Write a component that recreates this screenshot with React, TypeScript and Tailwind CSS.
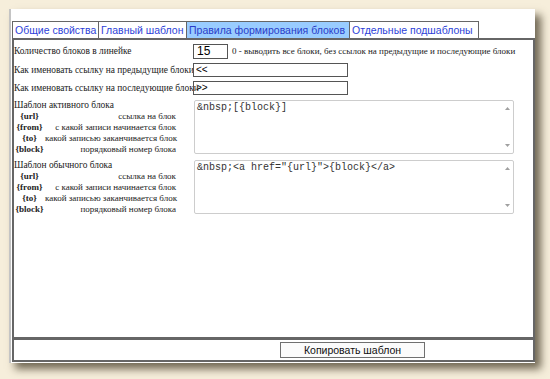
const tabs = [
  { label: 'Общие свойства', w: 'w-[87px] border-l', active: false },
  { label: 'Главный шаблон', w: 'w-[88px]', active: false },
  { label: 'Правила формирования блоков', w: 'w-[163px]', active: true },
  { label: 'Отдельные подшаблоны', w: 'w-[129px]', active: false },
]

const vars = [
  { key: '{url}', text: 'ссылка на блок' },
  { key: '{from}', text: 'с какой записи начинается блок' },
  { key: '{to}', text: 'какой записью заканчивается блок' },
  { key: '{block}', text: 'порядковый номер блока' },
]

function Legend({ title }: { title: string }) {
  return (
    <div className="w-[162px] text-[9px] leading-[11px] text-[#222]">
      <div className="text-[9.4px]">{title}</div>
      {vars.map((v) => (
        <div key={v.key} className="grid grid-cols-[31px_1fr]">
          <span className="text-center font-bold">{v.key}</span>
          <span className="text-right whitespace-nowrap">{v.text}</span>
        </div>
      ))}
    </div>
  )
}

function Area({ value }: { value: string }) {
  return (
    <div className="ml-px flex shrink-0 w-[320px] h-[54px] border border-[#cdcdcd] rounded-[2px] bg-white">
      <div className="flex-1 px-[2px] pt-[1px] font-['Liberation_Mono',monospace] text-[10px] leading-[12px] text-[#333] whitespace-pre">
        {value}
      </div>
      <div className="w-[12px] flex flex-col items-center justify-between py-[6px]">
        <svg width="5" height="3" viewBox="0 0 5 3">
          <path d="M0 3 L2.5 0 L5 3 Z" fill="#a0a0a0" />
        </svg>
        <svg width="5" height="3" viewBox="0 0 5 3">
          <path d="M0 0 L2.5 3 L5 0 Z" fill="#a0a0a0" />
        </svg>
      </div>
    </div>
  )
}

export default function App() {
  return (
    <div className="w-[550px] h-[379px] bg-[#f6eedb] overflow-hidden pt-[9px] pl-[9px]">
      <div className="w-[526px] h-[354px] bg-white border-l-2 border-[#c4c4c4] pl-px pt-[12px] flex flex-col shadow-[6px_6px_8px_rgba(70,60,40,0.75)]">
        <div className="flex h-[17px] font-['Liberation_Sans',sans-serif] text-[10.5px] leading-[16px]">
          {tabs.map((t) => (
            <div
              key={t.label}
              className={`${t.w} shrink-0 border-t border-r border-[#666] px-[2px] whitespace-nowrap ${
                t.active ? 'bg-[#99ccff] text-[#2a3cc8]' : 'text-[#2d3fd8]'
              }`}
            >
              {t.label}
            </div>
          ))}
        </div>

        <div className="h-[301px] border-2 border-[#666] pt-[4px] overflow-hidden font-['Liberation_Serif',serif] text-[9.4px] text-[#222]">
          <div className="flex items-center h-[15px]">
            <div className="shrink-0 w-[179px] whitespace-nowrap">Количество блоков в линейке</div>
            <div className="shrink-0 w-[35px] h-[15px] border border-[#555] px-[3px] font-['Liberation_Sans',sans-serif] text-[12px] leading-[13px] text-black">
              15
            </div>
            <div className="ml-[4px] whitespace-nowrap text-[9px]">
              0 - выводить все блоки, без ссылок на предыдущие и последующие блоки
            </div>
          </div>

          <div className="flex items-center h-[14px] mt-[4px]">
            <div className="shrink-0 w-[179px] whitespace-nowrap">Как именовать ссылку на предыдущие блоки</div>
            <div className="shrink-0 w-[155px] h-[14px] border border-[#555] px-[2px] font-['Liberation_Sans',sans-serif] text-[10px] leading-[12px] text-black">
              {'<<'}
            </div>
          </div>

          <div className="flex items-center h-[14px] mt-[4px]">
            <div className="shrink-0 w-[179px] whitespace-nowrap">Как именовать ссылку на последующие блоки</div>
            <div className="shrink-0 w-[155px] h-[14px] border border-[#555] px-[2px] font-['Liberation_Sans',sans-serif] text-[10px] leading-[12px] text-black">
              {'>>'}
            </div>
          </div>

          <div className="flex items-start mt-[5px]">
            <div className="shrink-0 w-[179px]">
              <Legend title="Шаблон активного блока" />
            </div>
            <Area value={'&nbsp;[{block}]'} />
          </div>

          <div className="flex items-start mt-[5px]">
            <div className="shrink-0 w-[179px]">
              <Legend title="Шаблон обычного блока" />
            </div>
            <Area value={'&nbsp;<a href="{url}">{block}</a>'} />
          </div>
        </div>

        <div className="flex items-start h-[23px] border-x-2 border-b-2 border-t border-[#666] pt-[2px]">
          <button className="block ml-[266px] w-[145px] h-[16px] border border-[#707070] bg-[#fbfbfb] font-['Liberation_Sans',sans-serif] text-[10.5px] leading-[14px] text-[#111]">
            Копировать шаблон
          </button>
        </div>
      </div>
    </div>
  )
}
